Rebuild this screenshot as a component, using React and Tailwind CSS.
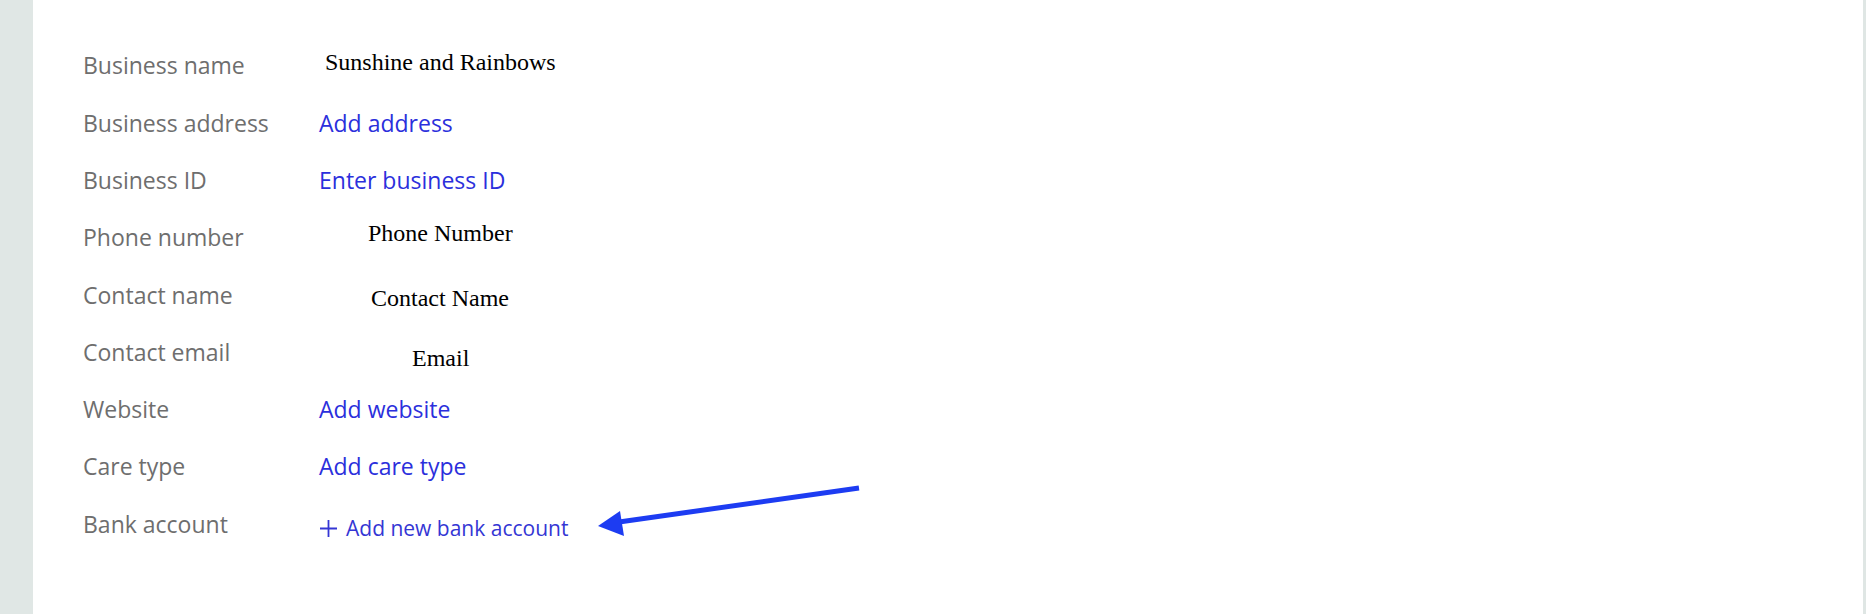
import React from 'react';

const rows = [
  { label: 'Business name', value: 'Sunshine and Rainbows', kind: 'serif', pad: 'pl-[6px] -mt-[8px]' },
  { label: 'Business address', value: 'Add address', kind: 'link' },
  { label: 'Business ID', value: 'Enter business ID', kind: 'link' },
  { label: 'Phone number', value: 'Phone Number', kind: 'serif', pad: 'pl-[49px] -mt-[9px]' },
  { label: 'Contact name', value: 'Contact Name', kind: 'serif', pad: 'pl-[52px] mt-[6px]' },
  { label: 'Contact email', value: 'Email', kind: 'serif', pad: 'pl-[93px] mt-[11px]' },
  { label: 'Website', value: 'Add website', kind: 'link' },
  { label: 'Care type', value: 'Add care type', kind: 'link' },
];

function Value({ row }) {
  if (row.kind === 'link') {
    return <span className="text-[23px] text-[#2b2fdc] cursor-pointer">{row.value}</span>;
  }
  return (
    <span className={`${row.pad} text-[24px] text-black font-['Liberation_Serif',serif]`}>
      {row.value}
    </span>
  );
}

export default function App() {
  return (
    <div className="flex w-full h-[614px] bg-white font-['Open_Sans',sans-serif] overflow-hidden">
      <div className="w-[33px] shrink-0 bg-[#e0e7e5]" />
      <div className="relative flex-1 pl-[50px] pt-[37px]">
        {rows.map((row) => (
          <div key={row.label} className="flex items-center h-[57.3px]">
            <div className="w-[236px] shrink-0 text-[23px] text-[#6e6e6e]">{row.label}</div>
            <Value row={row} />
          </div>
        ))}
        <div className="flex items-center h-[57.3px]">
          <div className="w-[236px] shrink-0 text-[23px] text-[#6e6e6e]">Bank account</div>
          <button className="flex items-center gap-[8px] mt-[9px] text-[21px] text-[#3436d4]">
            <svg width="19" height="19" viewBox="0 0 19 19" fill="none" stroke="currentColor" strokeWidth="1.8">
              <path d="M9.5 1v17M1 9.5h17" />
            </svg>
            Add new bank account
          </button>
        </div>
        <svg
          className="absolute left-0 top-0 pointer-events-none"
          width="1000"
          height="614"
          viewBox="33 0 1000 614"
        >
          <line x1="859" y1="488" x2="612" y2="523" stroke="#1d3cf2" strokeWidth="5" />
          <polygon points="598,526 620,511 624,536" fill="#1d3cf2" />
        </svg>
      </div>
      <div className="w-[3px] shrink-0 bg-[#dfe6e4]" />
    </div>
  );
}
